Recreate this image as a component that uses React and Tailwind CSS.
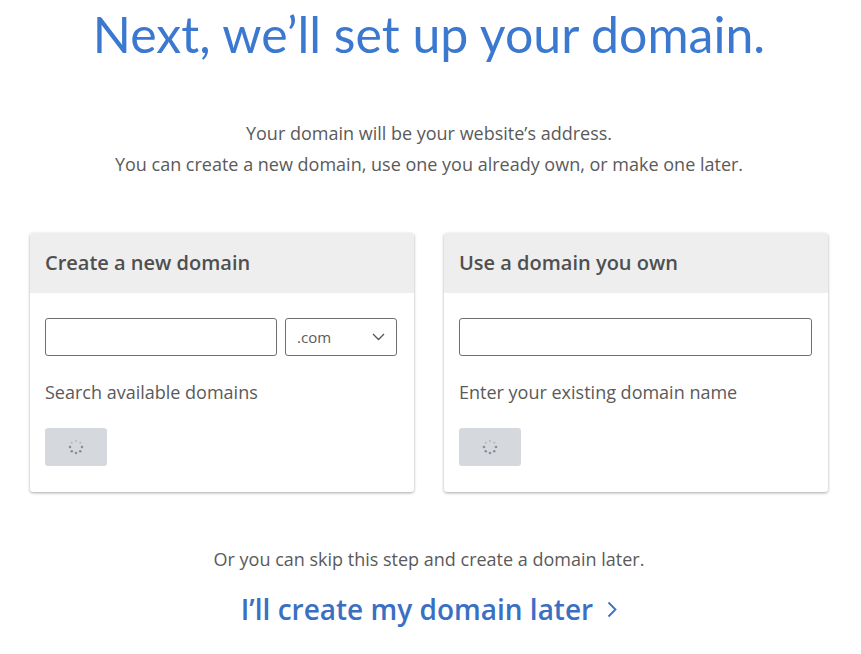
import React from 'react';

const Spinner = () => (
    <svg width="16" height="16" viewBox="0 0 16 16">
        {[0, 1, 2, 3, 4, 5, 6, 7].map((i) => {
            const a = (i * Math.PI) / 4;
            return (
                <circle
                    key={i}
                    cx={8 + 6 * Math.cos(a)}
                    cy={8 + 6 * Math.sin(a)}
                    r={i < 5 ? 1.3 : 1}
                    fill={i < 5 ? '#8a8f96' : '#b3b7bc'}
                />
            );
        })}
    </svg>
);

const Card = ({ title, children, label }) => (
    <div className="w-[384px] bg-white rounded-[3px] shadow-[0_1px_3px_rgba(0,0,0,0.35)] overflow-hidden">
        <div className="h-[60px] bg-[#eeeeee] flex items-center px-[15px]">
            <h2 className="text-[20px] font-semibold text-[#4f4f4f]">{title}</h2>
        </div>
        <div className="px-[15px] pt-[25px] pb-[26px]">
            {children}
            <p className="mt-[24px] text-[18px] text-[#5a5a5a] leading-[24px]">{label}</p>
            <div className="mt-[24px] w-[62px] h-[38px] rounded-[3px] bg-[#d5d8dc] flex items-center justify-center">
                <Spinner />
            </div>
        </div>
    </div>
);

const App = () => {
    return (
        <div className="w-[861px] h-[654px] pr-[3px] bg-white font-['Open_Sans',sans-serif] flex flex-col items-center">
            {/* Heading */}
            <h1 className="mt-[2px] text-[50px] leading-[64px] text-[#3b78cf] font-['Lato',sans-serif]">
                Next, we’ll set up your domain.
            </h1>

            <div className="mt-[52px] text-center text-[18px] leading-[31px] text-[#5a5a5a]">
                <p>Your domain will be your website’s address.</p>
                <p>You can create a new domain, use one you already own, or make one later.</p>
            </div>

            {/* Cards */}
            <div className="mt-[53px] flex gap-[30px]">
                <Card title="Create a new domain" label="Search available domains">
                    <div className="flex gap-[8px]">
                        <div className="w-[232px] h-[38px] border border-[#6f6f6f] rounded-[3px]" />
                        <div className="w-[112px] h-[38px] border border-[#6f6f6f] rounded-[3px] flex items-center justify-between pl-[11px] pr-[11px]">
                            <span className="text-[15px] text-[#5a5a5a]">.com</span>
                            <svg width="13" height="8" viewBox="0 0 13 8" fill="none" stroke="#555" strokeWidth="1.3">
                                <path d="M1 1l5.5 5.5L12 1" />
                            </svg>
                        </div>
                    </div>
                </Card>
                <Card title="Use a domain you own" label="Enter your existing domain name">
                    <div className="w-[353px] h-[38px] border border-[#6f6f6f] rounded-[3px]" />
                </Card>
            </div>

            <p className="mt-[54px] text-[18px] text-[#5a5a5a]">Or you can skip this step and create a domain later.</p>
            <a className="mt-[15px] flex items-center gap-[14px] text-[28px] font-semibold text-[#3b6fc4]">
                I’ll create my domain later
                <svg width="10" height="17" viewBox="0 0 10 17" fill="none" stroke="#3b6fc4" strokeWidth="1.8">
                    <path d="M1.5 1.5l7 7-7 7" />
                </svg>
            </a>
        </div>
    );
};

export default App;
